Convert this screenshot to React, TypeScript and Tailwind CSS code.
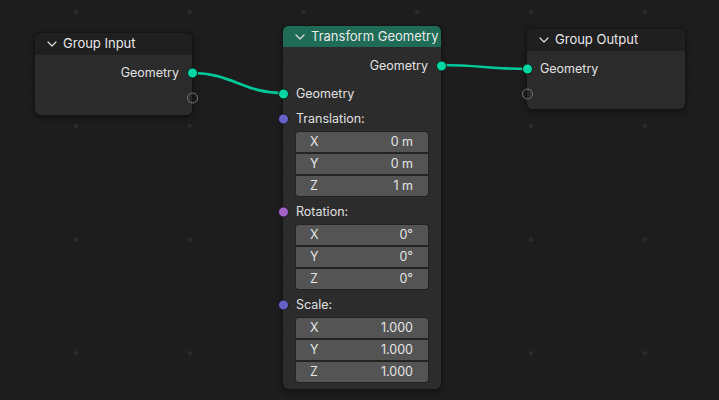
import React from 'react'

const FONT = { fontFamily: 'Inter, "Noto Sans", "DejaVu Sans", sans-serif' }

type SocketKind = 'geometry' | 'vector' | 'rotation' | 'empty'

const socketClass: Record<SocketKind, string> = {
  geometry: 'bg-[#00d6a3] border-[#0b1f19]',
  vector: 'bg-[#6363c7] border-[#17172e]',
  rotation: 'bg-[#a363c7] border-[#26172e]',
  empty: 'bg-transparent border-[#777777] border-[1.5px]',
}

function Socket({ kind, side }: { kind: SocketKind; side: 'left' | 'right' }) {
  return (
    <span
      className={`absolute top-1/2 -translate-y-1/2 w-[11px] h-[11px] rounded-full border ${socketClass[kind]} ${
        side === 'left' ? '-left-[5.5px]' : '-right-[5.5px]'
      }`}
    />
  )
}

function Chevron() {
  return (
    <svg width="10" height="6" viewBox="0 0 10 6" className="shrink-0">
      <polyline points="1,1 5,5 9,1" fill="none" stroke="#d8d8d8" strokeWidth="1.2" strokeLinecap="round" strokeLinejoin="round" />
    </svg>
  )
}

function Header({ title, green }: { title: string; green?: boolean }) {
  return (
    <div
      className={`flex items-center gap-[6px] pl-[12px] rounded-t-[5px] text-[13px] text-[#e8e8e8] ${
        green ? 'bg-[#1f6b55] h-[21px]' : 'bg-[#1f1f1f] h-[22px]'
      }`}
    >
      <Chevron />
      <span>{title}</span>
    </div>
  )
}

function Row({ label, align, socket, side, cls = '' }: { label?: string; align: 'left' | 'right'; socket: SocketKind; side: 'left' | 'right'; cls?: string }) {
  return (
    <div className={`relative h-[22px] flex items-center text-[12.5px] text-[#e0e0e0] ${align === 'right' ? 'justify-end pr-[13px]' : 'pl-[13px]'} ${cls}`}>
      {label && <span>{label}</span>}
      <Socket kind={socket} side={side} />
    </div>
  )
}

function VectorField({ values }: { values: string[] }) {
  const axes = ['X', 'Y', 'Z']
  return (
    <div className="mx-[12px] mt-px rounded-[4px] bg-[#232323] p-px flex flex-col gap-[2px]">
      {axes.map((a, i) => (
        <div
          key={a}
          className={`h-[20px] bg-[#545454] flex items-center justify-between pl-[14px] pr-[15px] text-[12.5px] text-[#e4e4e4] ${
            i === 0 ? 'rounded-t-[3px]' : i === 2 ? 'rounded-b-[3px]' : ''
          }`}
        >
          <span>{a}</span>
          <span>{values[i]}</span>
        </div>
      ))}
    </div>
  )
}

function GridBackground() {
  const step = 22.75
  const half = 56.875
  const dots: React.ReactNode[] = []
  for (let i = -2; i <= 2; i++) {
    for (let j = -2; j <= 2; j++) {
      if (i === 0 && j === 0) continue
      dots.push(<circle key={`${i}${j}`} cx={half + i * step} cy={half + j * step} r="1.1" fill="#232323" />)
    }
  }
  return (
    <svg className="absolute inset-0" width="719" height="400">
      <defs>
        <pattern id="grid" patternUnits="userSpaceOnUse" width="113.75" height="113.75" x="19.125" y="-44.875">
          {dots}
          <circle cx={half} cy={half} r="2.2" fill="#2b2b2b" />
        </pattern>
      </defs>
      <rect width="719" height="400" fill="#1d1d1d" />
      <rect width="719" height="400" fill="url(#grid)" />
      <path d="M192 73 C 232 73, 243 93, 283 93" fill="none" stroke="#00c899" strokeWidth="2.6" />
      <path d="M441 65 C 480 65, 488 69, 527 69" fill="none" stroke="#00c899" strokeWidth="2.6" />
    </svg>
  )
}

const nodeBase = 'absolute rounded-[5px] bg-[#2b2b2b] shadow-[0_2px_7px_rgba(0,0,0,0.55)] outline outline-1 outline-[#151515]'

export default function App() {
  return (
    <div className="relative w-[719px] h-[400px] overflow-hidden bg-[#1d1d1d]" style={FONT}>
      <GridBackground />

      {/* Group Input */}
      <div className={`${nodeBase} left-[35px] top-[33px] w-[157px] h-[82px]`}>
        <Header title="Group Input" />
        <div className="pt-[7px]">
          <Row label="Geometry" align="right" socket="geometry" side="right" />
          <Row align="right" socket="empty" side="right" cls="mt-[3px]" />
        </div>
      </div>

      {/* Transform Geometry */}
      <div className={`${nodeBase} left-[283px] top-[26px] w-[158px] h-[363px] bg-[#2c2c2c]`}>
        <Header title="Transform Geometry" green />
        <div className="pt-[8px] flex flex-col">
          <Row label="Geometry" align="right" socket="geometry" side="right" />
          <Row label="Geometry" align="left" socket="geometry" side="left" cls="mt-[6px]" />
          <Row label="Translation:" align="left" socket="vector" side="left" cls="mt-[3px]" />
          <VectorField values={['0 m', '0 m', '1 m']} />
          <Row label="Rotation:" align="left" socket="rotation" side="left" cls="mt-[4px]" />
          <VectorField values={['0°', '0°', '0°']} />
          <Row label="Scale:" align="left" socket="vector" side="left" cls="mt-[4px]" />
          <VectorField values={['1.000', '1.000', '1.000']} />
        </div>
      </div>

      {/* Group Output */}
      <div className={`${nodeBase} left-[527px] top-[29px] w-[158px] h-[80px]`}>
        <Header title="Group Output" />
        <div className="pt-[7px]">
          <Row label="Geometry" align="left" socket="geometry" side="left" />
          <Row align="left" socket="empty" side="left" cls="mt-[3px]" />
        </div>
      </div>
    </div>
  )
}
